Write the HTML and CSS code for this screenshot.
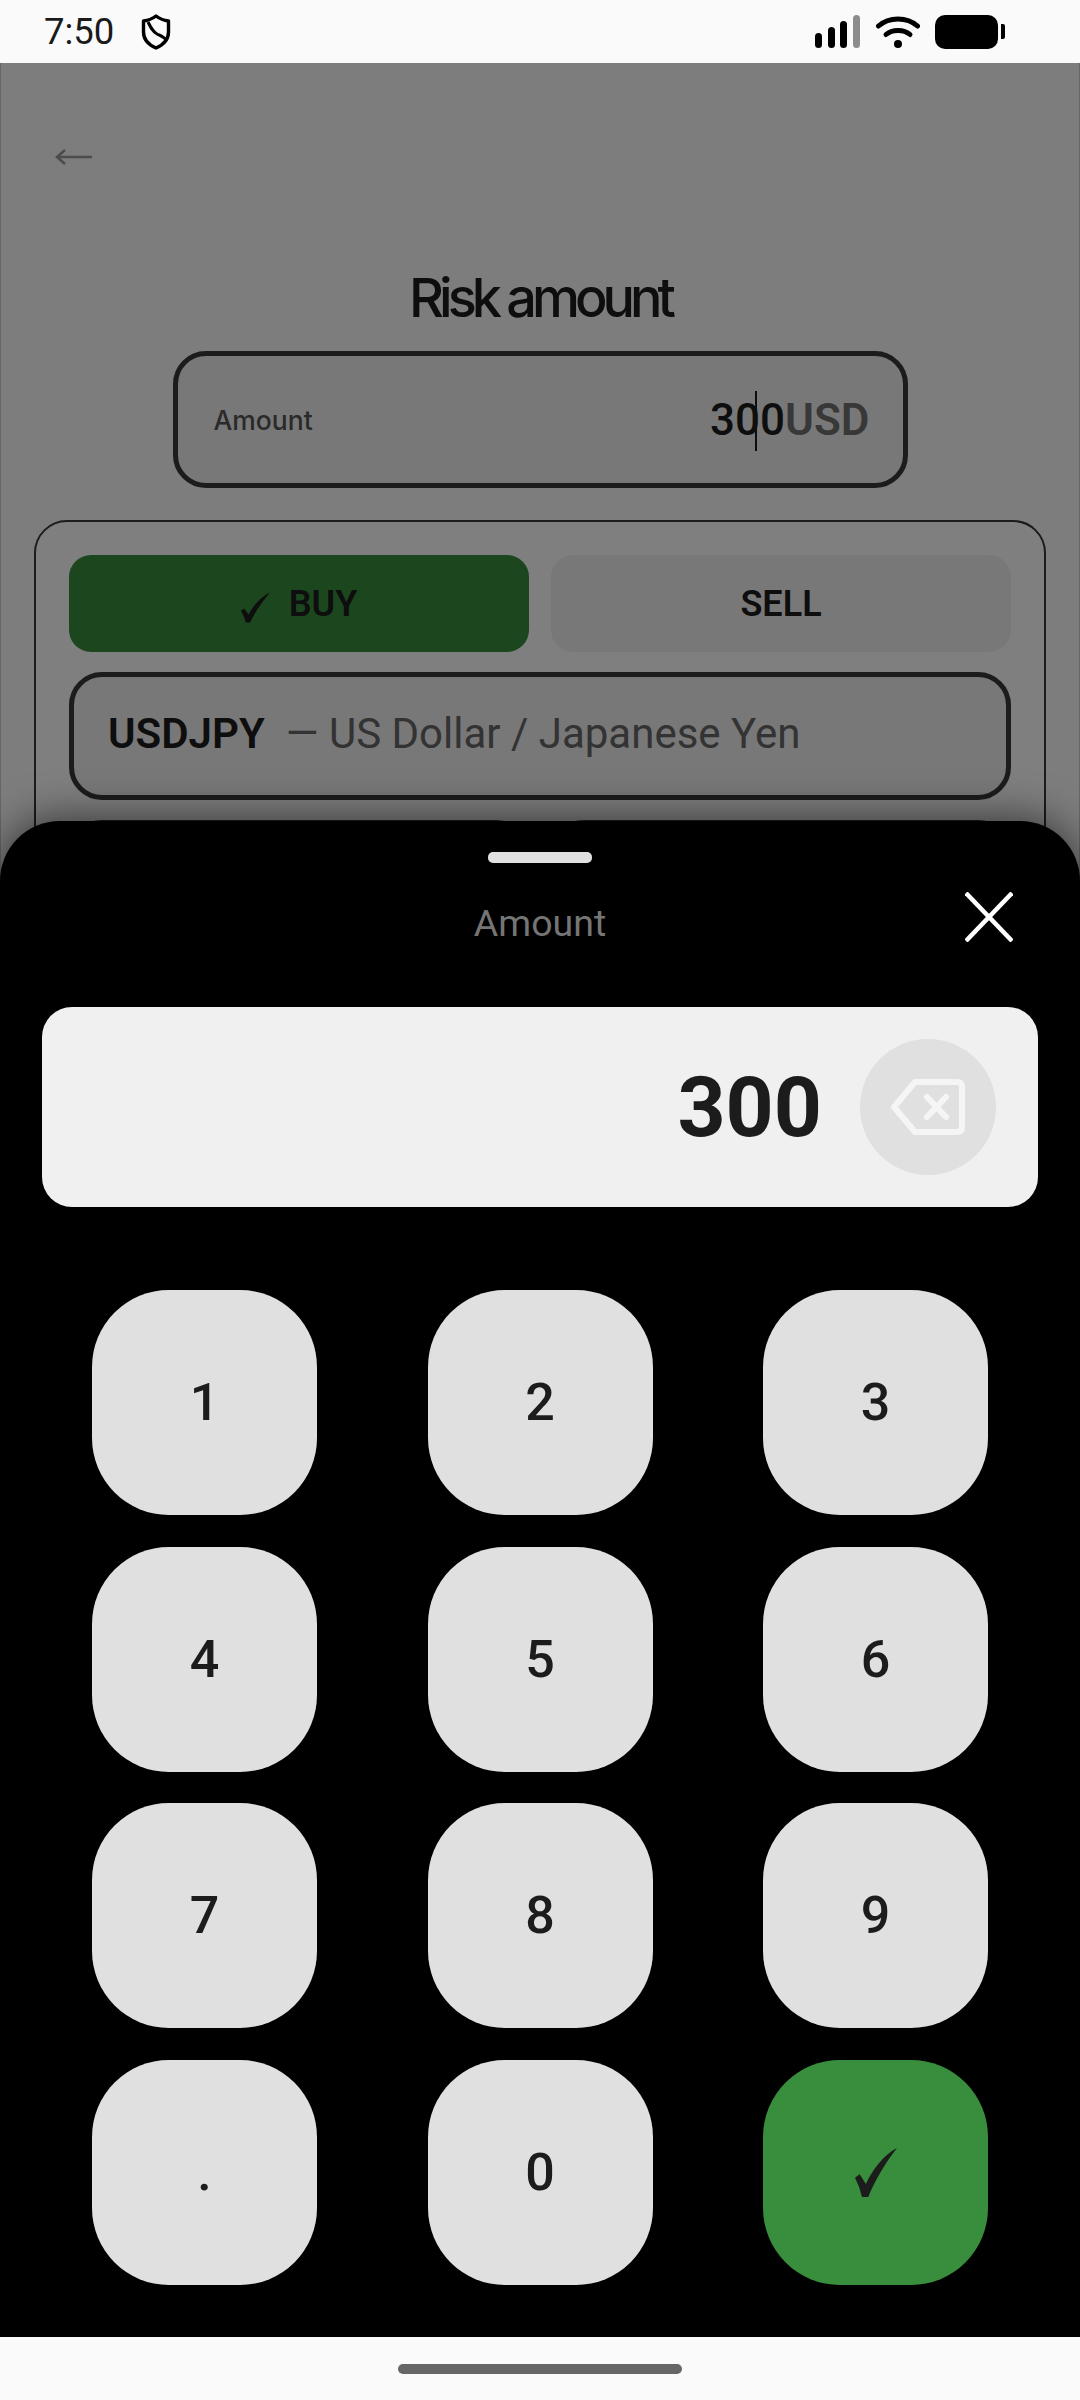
FILE: index.html
```html
<!DOCTYPE html>
<html lang="en">
<head>
  <meta charset="UTF-8">
  <meta name="viewport" content="width=device-width, initial-scale=1.0">
  <title>Risk amount</title>
  <link rel="stylesheet" href="styles.css">
</head>
<body>
  <div class="status-bar">
    <div class="status-left">
      <span class="clock">7:50</span>
      <svg class="shield" width="30" height="36" viewBox="0 0 30 36" fill="none" stroke="#000" stroke-width="3.4" stroke-linejoin="round">
        <path d="M15 2 C19 5 23 6.5 27.5 7 V18 C27.5 26 22 31 15 34 C8 31 2.5 26 2.5 18 V7 C7 6.5 11 5 15 2 Z"/>
        <path d="M7 8 C10 14 12 18 16 20 C20 22 23 23 25 26" stroke-width="3"/>
      </svg>
    </div>
    <div class="status-right">
      <svg width="46" height="34" viewBox="0 0 46 34">
        <rect x="0" y="18" width="7" height="15" rx="3.5" fill="#000"/>
        <rect x="13" y="12" width="7" height="21" rx="3.5" fill="#000"/>
        <rect x="25" y="6" width="7" height="27" rx="3.5" fill="#000"/>
        <rect x="38" y="0" width="7" height="33" rx="3.5" fill="#8c8c8c"/>
      </svg>
      <svg class="wifi" width="44" height="34" viewBox="0 0 44 34" fill="none" stroke="#000" stroke-linecap="round">
        <path d="M2.5 11 C13 1.5 31 1.5 41.5 11" stroke-width="5"/>
        <path d="M10 19.5 C16 14 28 14 34 19.5" stroke-width="5"/>
        <circle cx="22" cy="29" r="4" fill="#000" stroke="none"/>
      </svg>
      <div class="battery"><div class="battery-body"></div><div class="battery-cap"></div></div>
    </div>
  </div>

  <div class="screen">
    <div class="page">
      <svg class="back" width="38" height="34" viewBox="0 0 38 34" fill="none" stroke="#999" stroke-width="2.6">
        <path d="M2 17 H37"/>
        <path d="M10 10 L2 17 L10 24"/>
      </svg>
      <h1>Risk amount</h1>
      <div class="amount-box">
        <span class="amount-label">Amount</span>
        <span class="amount-value">30<span class="caret"></span>0<span class="currency">USD</span></span>
      </div>
      <div class="card">
        <div class="row">
          <div class="side-btn buy">
            <svg class="tick" width="29" height="31" viewBox="0 0 27 28" fill="#1c1c1c">
              <path d="M0 17 L3 15 L7 20.5 C11 13 18 4 27 0 C20 8 13 18 8.5 28 L4.5 28 Q3 22 0 17 Z"/>
            </svg>
            BUY
          </div>
          <div class="side-btn">SELL</div>
        </div>
        <div class="symbol-box">
          <strong>USDJPY</strong><span class="symbol-name">— US Dollar / Japanese Yen</span>
        </div>
        <div class="row">
          <div class="next-box"></div>
          <div class="next-box"></div>
        </div>
      </div>
    </div>

    <div class="scrim"></div>

    <div class="sheet">
      <div class="handle"></div>
      <div class="sheet-header">
        <span></span>
        <span class="sheet-title">Amount</span>
        <svg class="close" width="48" height="50" viewBox="0 0 48 50" stroke="#fff" stroke-width="4.4">
          <path d="M1 1 L47 49"/>
          <path d="M47 1 L1 49"/>
        </svg>
      </div>
      <div class="field">
        <span class="field-value">300</span>
        <div class="backspace">
          <svg width="74" height="56" viewBox="0 0 74 56" fill="none" stroke="#f5f5f5" stroke-width="6" stroke-linejoin="round" stroke-linecap="round">
            <path d="M24 3 H66 Q71 3 71 8 V48 Q71 53 66 53 H24 L3 28 Z"/>
            <path d="M36 18 L55 38"/>
            <path d="M55 18 L36 38"/>
          </svg>
        </div>
      </div>
      <div class="keypad">
        <div class="key">1</div>
        <div class="key">2</div>
        <div class="key">3</div>
        <div class="key">4</div>
        <div class="key">5</div>
        <div class="key">6</div>
        <div class="key">7</div>
        <div class="key">8</div>
        <div class="key">9</div>
        <div class="key">.</div>
        <div class="key">0</div>
        <div class="key confirm">
          <svg width="42" height="49" viewBox="0 0 27 28" fill="#1c1c1c" preserveAspectRatio="none">
            <path d="M0 17 L3 15 L7 20.5 C11 13 18 4 27 0 C20 8 13 18 8.5 28 L4.5 28 Q3 22 0 17 Z"/>
          </svg>
        </div>
      </div>
    </div>
  </div>

  <div class="nav-bar"><div class="nav-pill"></div></div>
</body>
</html>
```

FILE: styles.css
```css
* {
  box-sizing: border-box;
}

body {
  margin: 0;
  width: 1080px;
  height: 2400px;
  display: flex;
  flex-direction: column;
  overflow: hidden;
  font-family: 'Roboto', sans-serif;
  background-color: #fafafa;
  color: #1c1c1c;
}

/* Barra de status */
.status-bar {
  height: 63px;
  flex-shrink: 0;
  display: flex;
  justify-content: space-between;
  align-items: center;
  padding: 0 75px 0 44px;
  background-color: #fafafa;
}

.status-left {
  display: flex;
  align-items: center;
  gap: 27px;
}

.clock {
  font-size: 36.5px;
  color: #1a1a1a;
}

.status-right {
  display: flex;
  align-items: center;
  gap: 15px;
}

.battery {
  display: flex;
  align-items: center;
  gap: 3px;
}

.battery-body {
  width: 63px;
  height: 34px;
  border-radius: 10px;
  background-color: #000;
}

.battery-cap {
  width: 4px;
  height: 15px;
  background-color: #000;
  border-radius: 0 2px 2px 0;
}

/* Tela atras do painel */
.screen {
  position: relative;
  flex: 1;
  overflow: hidden;
}

.page {
  height: 100%;
  padding-top: 77px;
  border-left: 1px solid #ccc;
  border-right: 1px solid #ccc;
  background-color: #fafafa;
}

.back {
  display: block;
  margin-left: 54px;
}

h1 {
  margin: 91px 0 20px;
  text-align: center;
  font-family: 'Inter', sans-serif;
  font-size: 54px;
  line-height: 66px;
  font-weight: 500;
  letter-spacing: -5px;
}

.amount-box {
  width: 735px;
  height: 137px;
  margin: 0 auto 32px;
  padding: 0 33px 0 36px;
  display: flex;
  justify-content: space-between;
  align-items: center;
  border: 5px solid #383838;
  border-radius: 33px;
  background-color: #f0f0f0;
}

.amount-label {
  font-family: 'Inter', sans-serif;
  font-size: 26.5px;
  font-weight: 500;
  color: #555;
}

.amount-value {
  font-size: 44px;
  font-weight: 500;
}

/* cursor de texto sobre os digitos */
.caret {
  display: inline-block;
  position: relative;
  width: 0;
  height: 0;
}

.caret::after {
  content: '';
  position: absolute;
  left: -5px;
  bottom: -16px;
  width: 2px;
  height: 60px;
  background-color: #1c1c1c;
}

.currency {
  color: #707070;
  font-weight: 600;
}

.card {
  margin: 0 33px;
  padding: 33px;
  height: 400px;
  border: 2px solid #383838;
  border-radius: 33px;
  background-color: #fff;
  display: flex;
  flex-direction: column;
  gap: 20px;
}

.row {
  display: flex;
  flex-shrink: 0;
  gap: 22px;
}

.side-btn {
  flex: 1;
  height: 97px;
  display: flex;
  justify-content: center;
  align-items: center;
  border-radius: 22px;
  font-size: 36px;
  font-weight: 600;
  background-color: #f0f0f0;
}

.buy {
  background-color: #388e3c;
}

.tick {
  margin: 8px 19px 0 0;
}

.symbol-box {
  height: 128px;
  flex-shrink: 0;
  padding: 0 34px 5px;
  display: flex;
  align-items: center;
  border: 5px solid #383838;
  border-radius: 33px;
  background-color: #f0f0f0;
  font-size: 42px;
}

.symbol-box strong {
  font-weight: 600;
  margin-right: 21px;
}

.symbol-name {
  color: #666;
}

.next-box {
  flex: 1;
  height: 128px;
  border: 5px solid #383838;
  border-radius: 33px;
}

.scrim {
  position: absolute;
  inset: 0;
  background-color: rgba(0, 0, 0, 0.5);
}

/* Painel do teclado */
.sheet {
  position: absolute;
  left: 0;
  right: 0;
  bottom: 0;
  height: 1516px;
  padding-top: 31px;
  border-radius: 60px 60px 0 0;
  background-color: #000;
  box-shadow: 0 -4px 40px rgba(0, 0, 0, 0.55);
}

.handle {
  width: 104px;
  height: 11px;
  margin: 0 auto 29px;
  border-radius: 5px;
  background-color: #e0e0e0;
}

.sheet-header {
  display: grid;
  grid-template-columns: 1fr auto 1fr;
}

.sheet-title {
  margin-top: 6px;
  font-size: 37.5px;
  line-height: 50px;
  color: #757575;
}

.close {
  justify-self: end;
  margin-right: 67px;
}

.field {
  height: 200px;
  margin: 59px 42px 83px;
  padding-right: 42px;
  display: flex;
  justify-content: flex-end;
  align-items: center;
  gap: 38px;
  border-radius: 30px;
  background-color: #f0f0f0;
}

.field-value {
  font-size: 84px;
  font-weight: 700;
}

.backspace {
  width: 136px;
  height: 136px;
  display: flex;
  justify-content: center;
  align-items: center;
  border-radius: 50%;
  background-color: #e0e0e0;
}

.keypad {
  display: grid;
  grid-template-columns: repeat(3, 225px);
  grid-auto-rows: 225px;
  justify-content: space-between;
  row-gap: 31.67px;
  padding: 0 92px;
}

.key {
  display: flex;
  justify-content: center;
  align-items: center;
  border-radius: 77px;
  background-color: #e0e0e0;
  font-size: 52px;
  font-weight: 500;
}

.confirm {
  background-color: #388e3c;
}

.nav-bar {
  height: 63px;
  flex-shrink: 0;
  padding-top: 27px;
  background-color: #fafafa;
}

.nav-pill {
  width: 284px;
  height: 10px;
  margin: 0 auto;
  border-radius: 5px;
  background-color: #666;
}
```
